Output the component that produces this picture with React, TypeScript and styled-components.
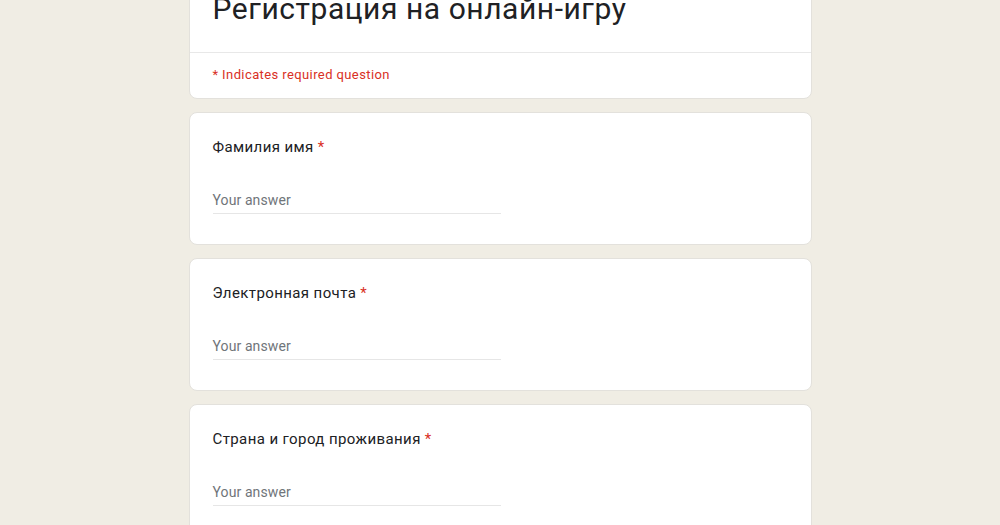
import React from "react";
import styled, { createGlobalStyle } from "styled-components";

const Global = createGlobalStyle`
  html, body { margin: 0; padding: 0; background: #f0ede4; }
  body { font-family: Roboto, "Liberation Sans", Arial, sans-serif; overflow: hidden; }
`;

const Page = styled.div`
  width: 1000px;
  height: 525px;
  overflow: hidden;
  display: flex;
  justify-content: center;
`;

const Column = styled.div`
  width: 623px;
  margin-top: -9px;
  display: flex;
  flex-direction: column;
  gap: 13px;
`;

const Card = styled.div`
  background: #ffffff;
  border: 1px solid #e3e1dc;
  border-radius: 8px;
  box-sizing: border-box;
`;

const HeaderTop = styled.div`
  padding: 0 23px 26px;
  border-bottom: 1px solid #e8e8e8;
`;

const Title = styled.h1`
  margin: 0;
  font-family: Roboto, "Liberation Sans", Arial, sans-serif;
  font-weight: 400;
  font-size: 30px;
  line-height: 34px;
  color: #202124;
  letter-spacing: 0.55px;
  white-space: nowrap;
`;

const Required = styled.div`
  padding: 12px 23px 13px;
  font-size: 13px;
  line-height: 20px;
  color: #d93025;
  letter-spacing: 0.4px;
`;

const Question = styled(Card)`
  padding: 22px 23px 31px;
  height: 133px;
`;

const Label = styled.div`
  font-size: 15px;
  line-height: 24px;
  color: #202124;
  letter-spacing: 0.4px;
`;

const Star = styled.span`
  color: #d93025;
  margin-left: 4px;
`;

const Answer = styled.div`
  margin-top: 31px;
  width: 288px;
  padding-bottom: 3px;
  border-bottom: 1px solid #e6e6e6;
  font-size: 14px;
  line-height: 20px;
  color: #70757a;
  letter-spacing: 0.1px;
`;

const questions = [
  "Фамилия имя",
  "Электронная почта",
  "Страна и город проживания",
];

export default function App() {
  return (
    <>
      <Global />
      <Page>
        <Column>
          <Card>
            <HeaderTop>
              <Title>Регистрация на онлайн-игру</Title>
            </HeaderTop>
            <Required>* Indicates required question</Required>
          </Card>
          {questions.map((q) => (
            <Question key={q}>
              <Label>
                {q}
                <Star>*</Star>
              </Label>
              <Answer>Your answer</Answer>
            </Question>
          ))}
        </Column>
      </Page>
    </>
  );
}
